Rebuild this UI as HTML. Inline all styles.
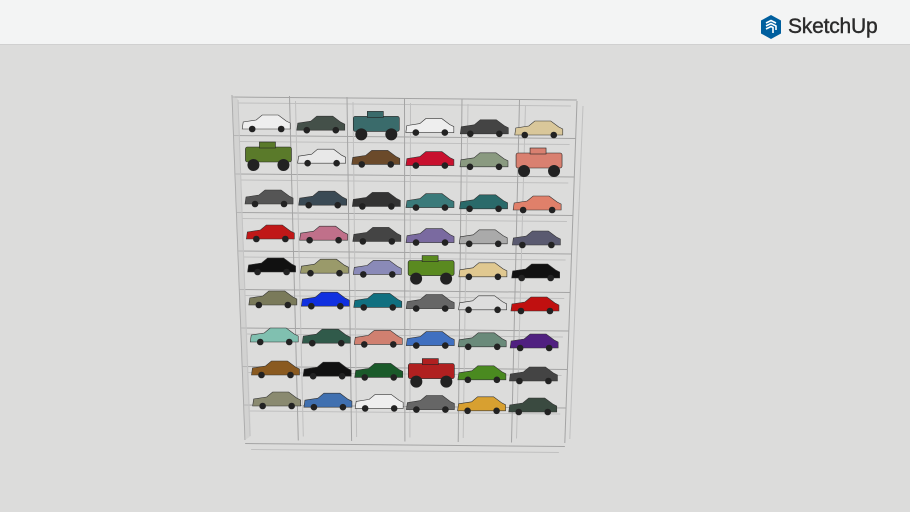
<!DOCTYPE html>
<html><head><style>
html,body{margin:0;padding:0;width:910px;height:512px;overflow:hidden;background:#dcdcdb;font-family:"Liberation Sans",sans-serif}
#hdr{position:absolute;left:0;top:0;width:910px;height:44px;background:#f3f4f4;border-bottom:1px solid #d0d0d0}
#logo{position:absolute;left:760px;top:15px;display:flex;align-items:center}
#logo span{font-size:21px;color:#2b2b2b;margin-left:6px;letter-spacing:-0.2px;-webkit-text-stroke:0.4px #2b2b2b}
</style></head><body>
<div id="hdr"><div id="logo">
<svg width="22" height="24" viewBox="0 0 22 24"><path d="M11 0 L21 5.5 V18.5 L11 24 L1 18.5 V5.5 Z" fill="#005f9e"/><path d="M6 8 L11 5.5 L16 8 M6 11 L11 8.5 L16 11 L16 15 M6 14 L11 11.5 L13 12.5 V18" stroke="#fff" stroke-width="1.6" fill="none"/></svg>
<span>SketchUp</span></div></div>
<svg width="910" height="512" style="position:absolute;left:0;top:0" id="s"></svg>
<script>
var s=document.getElementById('s'),h='';
var cols=[["#eee","#445049","#3a6b6b","#eee","#444","#d9c79a"],["#5a7a2a","#e8e8e8","#6b4a2a","#c8102e","#8a9a80","#d98070"],["#555","#3a4a55","#333","#3a7a7a","#2a6a6a","#e0806a"],["#c01818","#c0708a","#444","#7a6aa0","#aaa","#5a5a70"],["#111","#9a9a6a","#8a8ab8","#5a8a20","#e0c890","#111"],["#7a7a5a","#1030e0","#107080","#666","#ddd","#c01010"],["#80c0b0","#305a4a","#d08070","#4070c0","#6a8a7a","#502080"],["#8a5a20","#111","#1a5a2a","#b02020","#4a8a20","#444"],["#8a8a70","#4070b0","#eee","#666","#d8a030","#3a4a40"]];
var trucks={"0,2":1,"1,0":1,"1,5":1,"4,3":1,"7,3":1};
var ry=[127,160,202,237,270,303,340,373,404];
function lx(y){return 232+(y-95)*13/345;}function rx(y){return 577-(y-95)*12/345;}
for(var i=0;i<=9;i++){var y=97+i*38.3+i*0.2;h+='<line x1="'+lx(y)+'" y1="'+y+'" x2="'+rx(y)+'" y2="'+(y+3)+'" stroke="#a4a4a4" stroke-width="1"/>';h+='<line x1="'+(lx(y)+6)+'" y1="'+(y+6)+'" x2="'+(rx(y)-6)+'" y2="'+(y+9)+'" stroke="#c0c0c0" stroke-width="1"/>';}
for(var j=0;j<=6;j++){var xt=232+j*57.5,xb=245+j*53.3;h+='<line x1="'+xt+'" y1="'+(95+j*1)+'" x2="'+xb+'" y2="'+(440+j*0.5)+'" stroke="#a4a4a4"/>';h+='<line x1="'+(xt+6)+'" y1="'+(100+j)+'" x2="'+(xb+5)+'" y2="'+(436+j*0.5)+'" stroke="#c0c0c0"/>';}
h+='<polygon points="232,95 238,99 251,436 245,440" fill="#c8c8c8" opacity=".5"/>';
for(var r=0;r<9;r++){for(var c=0;c<6;c++){var y=ry[r]+c*1.2,t=lx(y),x=t+33+c*(rx(y)-t-10)/6.1,col=cols[r][c];
if(trucks[r+","+c]){h+='<rect x="'+(x-22)+'" y="'+(y-13)+'" width="46" height="15" rx="2" fill="'+col+'" stroke="#222" stroke-width=".6"/><rect x="'+(x-8)+'" y="'+(y-18)+'" width="16" height="6" fill="'+col+'" stroke="#222" stroke-width=".6"/><circle cx="'+(x-14)+'" cy="'+(y+5)+'" r="6" fill="#222"/><circle cx="'+(x+16)+'" cy="'+(y+5)+'" r="6" fill="#222"/>';}
else{h+='<path d="M'+(x-24)+' '+(y+2)+' L'+(x-23)+' '+(y-5)+' L'+(x-10)+' '+(y-7)+' L'+(x-4)+' '+(y-12)+' L'+(x+12)+' '+(y-12)+' L'+(x+20)+' '+(y-6)+' L'+(x+24)+' '+(y-4)+' L'+(x+24)+' '+(y+2)+'Z" fill="'+col+'" stroke="#333" stroke-width=".6"/><circle cx="'+(x-14)+'" cy="'+(y+2)+'" r="3.3" fill="#222"/><circle cx="'+(x+15)+'" cy="'+(y+2)+'" r="3.3" fill="#222"/>';}}}
s.innerHTML=h;
</script>
</body></html>
